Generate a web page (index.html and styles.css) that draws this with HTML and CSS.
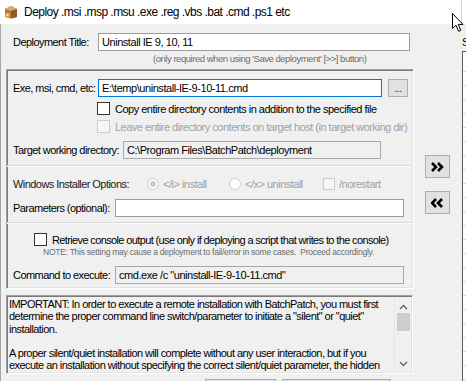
FILE: index.html
```html
<!DOCTYPE html>
<html>
<head>
<meta charset="utf-8">
<link rel="stylesheet" href="styles.css">
</head>
<body>
<div class="titlebar">
  <svg class="appicon" width="14" height="14" viewBox="0 0 14 14">
    <path d="M1 4 L7 1 L13 4 L13 12 L7 13.5 L1 12 Z" fill="#b07a44"/>
    <path d="M1 4 L7 1 L13 4 L7 6 Z" fill="#d9a86a"/>
    <path d="M7 6 L13 4 L13 12 L7 13.5 Z" fill="#8a5a2c"/>
    <circle cx="3.5" cy="10" r="2.6" fill="#f0a020"/>
    <circle cx="3.5" cy="10" r="1" fill="#fff3c0"/>
  </svg>
  <span class="title">Deploy .msi .msp .msu .exe .reg .vbs .bat .cmd .ps1 etc</span>
  <div class="tb-edge"></div>
  <svg class="cursor" width="13" height="20" viewBox="0 0 13 20">
    <path d="M0.5 0.5 L0.5 15.5 L4 12.2 L6.6 18.3 L8.8 17.3 L6.3 11.4 L11 11.4 Z" fill="#fff" stroke="#000" stroke-width="1" stroke-linejoin="miter"/>
  </svg>
</div>
<div class="window">
  <div class="main">
    <div class="row top-row">
      <span class="lbl w85">Deployment Title:</span>
      <div class="tb w312">Uninstall IE 9, 10, 11</div>
    </div>
    <div class="hint">(only required when using 'Save deployment' [&gt;&gt;] button)</div>

    <div class="group">
      <div class="row exe-row">
        <span class="lbl w85">Exe, msi, cmd, etc:</span>
        <div class="tb focus w284">E:\temp\uninstall-IE-9-10-11.cmd</div>
        <div class="btn browse">...</div>
      </div>
      <div class="row cb-row cb1">
        <span class="cb"></span><span class="cbtext">Copy entire directory contents in addition to the specified file</span>
      </div>
      <div class="row cb-row cb2">
        <span class="cb disabled"></span><span class="cbtext dis">Leave entire directory contents on target host (in target working dir)</span>
      </div>
      <div class="row target-row">
        <span class="lbl w110">Target working directory:</span>
        <div class="tb ro w258">C:\Program Files\BatchPatch\deployment</div>
      </div>
      <div class="sep sep1"></div>
      <div class="row wio-row">
        <span class="lbl w134">Windows Installer Options:</span>
        <span class="radio checked"></span><span class="opt w66">&lt;/i&gt; install</span>
        <span class="radio"></span><span class="opt w82">&lt;/x&gt; uninstall</span>
        <span class="cb disabled small"></span><span class="opt">/norestart</span>
      </div>
      <div class="row params-row">
        <span class="lbl w102">Parameters (optional):</span>
        <div class="tb w289"></div>
      </div>
      <div class="sep sep2"></div>
      <div class="row cb-row retrieve-row">
        <span class="cb"></span><span class="cbtext tight">Retrieve console output (use only if deploying a script that writes to the console)</span>
      </div>
      <div class="note">NOTE: This setting may cause a deployment to fail/error in some cases.&nbsp; Proceed accordingly.</div>
      <div class="row cmd-row">
        <span class="lbl w102">Command to execute:</span>
        <div class="tb ro w289">cmd.exe /c "uninstall-IE-9-10-11.cmd"</div>
      </div>
    </div>

    <div class="textarea">
      <div class="ta-text">
        <div class="ln">IMPORTANT: In order to execute a remote installation with BatchPatch, you must first</div>
        <div class="ln">determine the proper command line switch/parameter to initiate a "silent" or "quiet"</div>
        <div class="ln">installation.</div>
        <div class="ln">&nbsp;</div>
        <div class="ln">A proper silent/quiet installation will complete without any user interaction, but if you</div>
        <div class="ln">execute an installation without specifying the correct silent/quiet parameter, the hidden</div>
        <div class="ln">process will sit and wait for user input that will never come, because the</div>
      </div>
      <div class="vscroll">
        <svg class="sarrow" width="9" height="6" viewBox="0 0 9 6"><polyline points="1,5 4.5,1.5 8,5" fill="none" stroke="#606060" stroke-width="1.4"/></svg>
        <div class="thumb"></div>
        <div class="sfill"></div>
        <svg class="sarrow" width="9" height="6" viewBox="0 0 9 6"><polyline points="1,1 4.5,4.5 8,1" fill="none" stroke="#606060" stroke-width="1.4"/></svg>
      </div>
    </div>

    <div class="bottom-buttons">
      <div class="bbtn b1"></div>
      <div class="bbtn b2"></div>
    </div>
  </div>

  <div class="side">
    <div class="btn arrowbtn save">
      <svg width="13" height="10" viewBox="0 0 13 10"><polyline points="1,1 5,5 1,9" fill="none" stroke="#000" stroke-width="2.6"/><polyline points="7,1 11,5 7,9" fill="none" stroke="#000" stroke-width="2.6"/></svg>
    </div>
    <div class="btn arrowbtn load">
      <svg width="13" height="10" viewBox="0 0 13 10"><polyline points="5,1 1,5 5,9" fill="none" stroke="#000" stroke-width="2.6"/><polyline points="11,1 7,5 11,9" fill="none" stroke="#000" stroke-width="2.6"/></svg>
    </div>
  </div>

  <div class="saved">
    <div class="saved-label">Saved</div>
    <div class="listbox">
      <div class="li"></div><div class="li"></div><div class="li"></div><div class="li"></div>
      <div class="li"></div><div class="li"></div><div class="li"></div><div class="li"></div>
      <div class="li"></div><div class="li"></div><div class="li"></div><div class="li"></div>
      <div class="li"></div><div class="li"></div><div class="li"></div><div class="li"></div>
      <div class="li"></div><div class="li"></div><div class="li"></div><div class="li"></div>
      <div class="li"></div><div class="li"></div><div class="li"></div>
    </div>
  </div>
</div>
</body>
</html>
```
FILE: styles.css
```css
* { box-sizing: border-box; }
html, body {
  margin: 0;
  padding: 0;
}
body {
  width: 466px;
  height: 381px;
  overflow: hidden;
  background: #f0f0f0;
  font-family: "Liberation Sans", Arial, sans-serif;
  font-size: 11px;
  color: #000;
}

/* ---------- title bar ---------- */
.titlebar {
  position: relative;
  height: 24px;
  background: #fff;
  display: flex;
  align-items: center;
  padding-left: 4px;
}
.appicon { flex: none; margin-top: -1px; }
.title {
  margin-left: 6px;
  font-size: 12px;
  letter-spacing: -0.53px;
  color: #000;
  white-space: nowrap;
}
.tb-edge {
  position: absolute;
  left: 461px;
  top: 0;
  width: 1px;
  height: 24px;
  background: #d4d4d4;
}
.cursor {
  position: absolute;
  left: 452px;
  top: 13px;
}

/* ---------- window body ---------- */
.window {
  display: flex;
  height: 357px;
  border-left: 1px solid #a6a6a6;
}
.main {
  width: 413px;
  flex: none;
}
.row {
  display: flex;
  align-items: center;
  white-space: nowrap;
}
.lbl {
  flex: none;
  letter-spacing: -0.55px;
}
.w85 { width: 85px; }
.w102 { width: 102px; }
.w110 { width: 110px; }
.w134 { width: 134px; }

.tb {
  flex: none;
  height: 18px;
  background: #fff;
  border: 1px solid #9c9c9c;
  padding-left: 3px;
  line-height: 16px;
  letter-spacing: -0.45px;
  white-space: nowrap;
  overflow: hidden;
}
.tb.focus { border-color: #0078d7; }
.tb.ro { background: #f0f0f0; border-color: #a8a8a8; }
.w312 { width: 312px; }
.w284 { width: 284px; }
.w258 { width: 258px; }
.w289 { width: 289px; }

.top-row {
  margin-top: 9px;
  padding-left: 12px;
}
.hint {
  margin-top: 3px;
  margin-left: 152px;
  height: 10px;
  line-height: 10px;
  font-size: 9.5px;
  letter-spacing: -0.47px;
  color: #6d6d6d;
  white-space: nowrap;
}

/* ---------- group box ---------- */
.group {
  margin-top: 5px;
  margin-left: 5px;
  width: 408px;
  height: 220px;
  border: 1px solid;
  border-color: #a0a0a0 #ffffff #ffffff #a0a0a0;
  box-shadow: inset 1px 1px 0 #7a7a7a, inset -1px -1px 0 #e3e3e3;
  padding-left: 6px;
}
.exe-row { margin-top: 9px; }
.btn {
  background: #e1e1e1;
  border: 1px solid #adadad;
}
.browse {
  margin-left: 6px;
  width: 20px;
  height: 18px;
  font-size: 10px;
  line-height: 17px;
  text-align: center;
  color: #1a1a4a;
  letter-spacing: -0.5px;
}
.cb-row { height: 13px; }
.cb1 { margin-top: 5px; padding-left: 84px; }
.cb2 { margin-top: 5px; padding-left: 84px; }
.cb {
  flex: none;
  width: 13px;
  height: 13px;
  border: 1px solid #333;
  background: #fff;
}
.cb.disabled { border-color: #cccccc; background: #f7f7f7; }
.cb.small { width: 12px; height: 12px; }
.cbtext {
  margin-left: 5px;
  letter-spacing: -0.5px;
}
.cbtext.tight { letter-spacing: -0.63px; }
.cbtext.dis { color: #a0a0a0; }

.target-row { margin-top: 8px; }
.sep {
  margin-left: -6px;
  margin-right: 1px;
  height: 2px;
  border-top: 1px solid #dadada;
  border-bottom: 1px solid #fbfbfb;
}
.sep1 { margin-top: 6px; }
.wio-row { margin-top: 10px; height: 13px; }
.wio-row .lbl { color: #1a1a1a; }
.radio {
  flex: none;
  width: 12px;
  height: 12px;
  border: 1px solid #cccccc;
  border-radius: 50%;
  background: #fff;
  position: relative;
}
.radio.checked::after {
  content: "";
  position: absolute;
  left: 2px;
  top: 2px;
  width: 6px;
  height: 6px;
  border-radius: 50%;
  background: #cccccc;
}
.opt {
  flex: none;
  margin-left: 4px;
  color: #a0a0a0;
  letter-spacing: -0.5px;
}
.w66 { width: 66px; }
.w82 { width: 78px; }

.params-row { margin-top: 9px; }
.sep2 { margin-top: 5px; }
.retrieve-row { margin-top: 9px; padding-left: 21px; }
.note {
  margin-top: 1px;
  margin-left: 30px;
  height: 10px;
  line-height: 10px;
  font-size: 8.5px;
  letter-spacing: -0.25px;
  color: #6d6d6d;
  white-space: nowrap;
}
.cmd-row { margin-top: 9px; }

/* ---------- textarea ---------- */
.textarea {
  margin-top: 6px;
  margin-left: 5px;
  width: 407px;
  height: 79px;
  display: flex;
  border: 1px solid;
  border-color: #a0a0a0 #ffffff #ffffff #a0a0a0;
  box-shadow: inset 1px 1px 0 #7a7a7a, inset -1px -1px 0 #e3e3e3;
  background: #f0f0f0;
  overflow: hidden;
}
.ta-text {
  flex: 1;
  padding: 2px 0 0 2px;
  overflow: hidden;
}
.ln {
  height: 12.25px;
  line-height: 12.25px;
  letter-spacing: -0.55px;
  white-space: nowrap;
}
.vscroll {
  flex: none;
  width: 17px;
  margin: 1px 1px 1px 0;
  display: flex;
  flex-direction: column;
  align-items: center;
  border-left: 1px solid #e6e6e6;
}
.sarrow { margin-top: 7px; flex: none; }
.thumb {
  margin-top: 3px;
  width: 13px;
  height: 18px;
  background: #cdcdcd;
  flex: none;
}
.sfill { flex: 1; }
.vscroll .sarrow:last-child { margin-top: 0; margin-bottom: 5px; }

/* ---------- bottom buttons (clipped) ---------- */
.bottom-buttons {
  margin-top: 5px;
  display: flex;
  padding-left: 204px;
  gap: 6px;
}
.bbtn {
  height: 20px;
  background: #e1e1e1;
  border: 1px solid #adadad;
}
.b1 { width: 71px; }
.b2 { width: 109px; }

/* ---------- side buttons ---------- */
.side {
  width: 47px;
  flex: none;
  display: flex;
  flex-direction: column;
  padding-left: 11px;
}
.arrowbtn {
  width: 25px;
  height: 23px;
  display: flex;
  align-items: center;
  justify-content: center;
}
.save { margin-top: 131px; }
.load { margin-top: 13px; }

/* ---------- saved list (partially visible) ---------- */
.saved {
  flex: 1;
  overflow: hidden;
  display: flex;
  flex-direction: column;
}
.saved-label {
  margin-top: 12px;
  height: 12px;
  line-height: 12px;
  padding-left: 1px;
  font-size: 11px;
  white-space: nowrap;
}
.listbox {
  margin-top: 3px;
  flex: 1;
  background: #fff;
  border-left: 1px solid #5a5a5a;
  border-top: 1px solid #5a5a5a;
  margin-left: 1px;
  padding-top: 6px;
}
.li {
  height: 14px;
  border-bottom: 1px solid #d9d9d9;
}
```
